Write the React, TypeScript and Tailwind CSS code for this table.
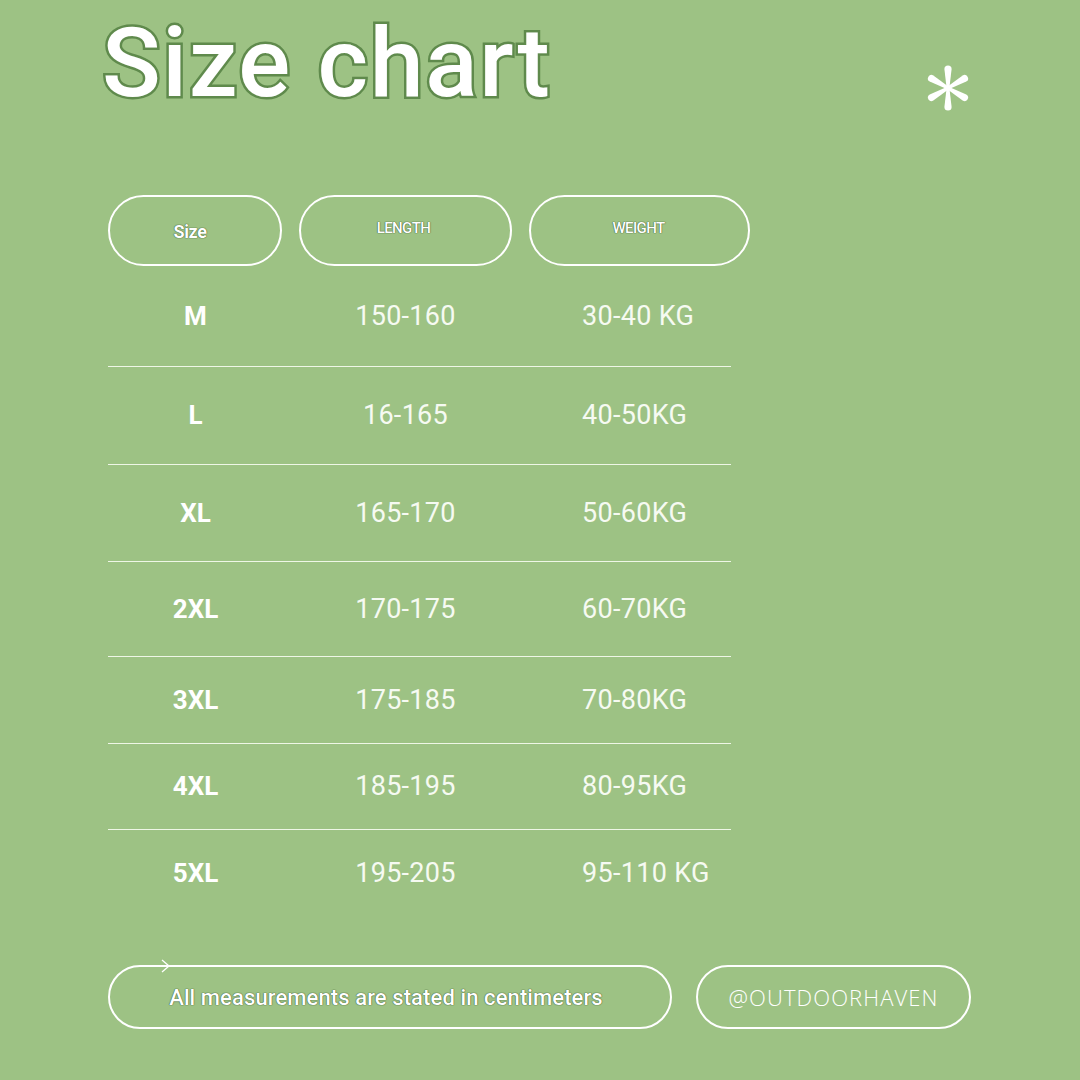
import React from "react";

const rows = [
  { size: "M", length: "150-160", weight: "30-40 KG", h: "h-[101px]" },
  { size: "L", length: "16-165", weight: "40-50KG", h: "h-[98px]" },
  { size: "XL", length: "165-170", weight: "50-60KG", h: "h-[97px]" },
  { size: "2XL", length: "170-175", weight: "60-70KG", h: "h-[95px]" },
  { size: "3XL", length: "175-185", weight: "70-80KG", h: "h-[87px]" },
  { size: "4XL", length: "185-195", weight: "80-95KG", h: "h-[86px]" },
  { size: "5XL", length: "195-205", weight: "95-110 KG", h: "h-[86px]" },
];

// six tapered arms, rounded at the tips
const Asterisk = () => {
  const angles = [0, 60, 120, 180, 240, 300];
  return (
    <svg width="56" height="56" viewBox="-28 -28 56 56">
      {angles.map((a) => (
        <path
          key={a}
          transform={`rotate(${a})`}
          d="M -1.4 0 L -3.6 -19 A 3.6 3.6 0 0 1 3.6 -19 L 1.4 0 Z"
          fill="#fff"
        />
      ))}
      <circle cx="0" cy="0" r="2.6" fill="#fff" />
    </svg>
  );
};

const headShadow = "[text-shadow:0_0_1px_#34522a,0_0_1px_#34522a]";

export default function App() {
  return (
    <div className="w-[1080px] h-[1080px] bg-[#9dc284] overflow-hidden font-['Liberation_Sans',sans-serif] text-white">
      {/* title */}
      <div className="flex items-start justify-between pl-[102px] pr-[104px] pt-[15px]">
        <h1 className="text-[97px] font-medium font-['Roboto',sans-serif] leading-none tracking-[1.6px] text-white [-webkit-text-stroke:5px_#5f8a4c] [paint-order:stroke_fill]">
          Size chart
        </h1>
        <div className="mt-[45px]">
          <Asterisk />
        </div>
      </div>

      {/* table */}
      <div className="ml-[108px] mt-[79px]">
        <div className="flex gap-[17px]">
          <div className="w-[174px] h-[71px] rounded-full border-2 border-white flex items-center justify-center pr-[10px] pt-[2px]">
            <span className={`text-[18px] font-bold font-['Roboto',sans-serif] tracking-[-0.4px] ${headShadow}`}>Size</span>
          </div>
          <div className="w-[213px] h-[71px] rounded-full border-2 border-white flex items-center justify-center pb-[5px] pr-[4px]">
            <span className={`text-[15px] font-medium font-['Roboto',sans-serif] tracking-[-0.6px] ${headShadow}`}>LENGTH</span>
          </div>
          <div className="w-[221px] h-[71px] rounded-full border-2 border-white flex items-center justify-center pb-[5px] pr-[2px]">
            <span className={`text-[15px] font-medium font-['Roboto',sans-serif] tracking-[-0.6px] ${headShadow}`}>WEIGHT</span>
          </div>
        </div>

        <div className="w-[623px] font-['Roboto',sans-serif]">
          {rows.map((r, i) => (
            <div
              key={r.size}
              className={`flex items-center ${r.h} ${i < rows.length - 1 ? "border-b-[1.5px] border-[#eef6e6]" : ""}`}
            >
              <div className="w-[174px] text-center text-[26px] font-bold pl-[1px]">{r.size}</div>
              <div className="w-[213px] ml-[17px] text-center text-[27px] text-[#f6faf2] tracking-[0.3px]">{r.length}</div>
              <div className="ml-[17px] pl-[53px] text-[27px] text-[#f6faf2] tracking-[0.3px]">{r.weight}</div>
            </div>
          ))}
        </div>
      </div>

      {/* footer */}
      <div className="flex gap-[24px] ml-[108px] mt-[49px]">
        <div className="relative w-[564px] h-[64px] rounded-full border-2 border-white flex items-center justify-center pr-[8px]">
          <svg className="absolute left-[50px] top-[-8px]" width="12" height="14" viewBox="0 0 12 14">
            <path d="M2 1 L9 7 L2 13" fill="none" stroke="#fff" strokeWidth="1.3" />
          </svg>
          <span className={`text-[22px] font-medium font-['Roboto',sans-serif] tracking-[0.1px] ${headShadow}`}>
            All measurements are stated in centimeters
          </span>
        </div>
        <div className="w-[275px] h-[64px] rounded-full border-2 border-white flex items-center justify-center">
          <span className="text-[22px] font-light font-['Open_Sans',sans-serif] tracking-[1.1px]">@OUTDOORHAVEN</span>
        </div>
      </div>
    </div>
  );
}
